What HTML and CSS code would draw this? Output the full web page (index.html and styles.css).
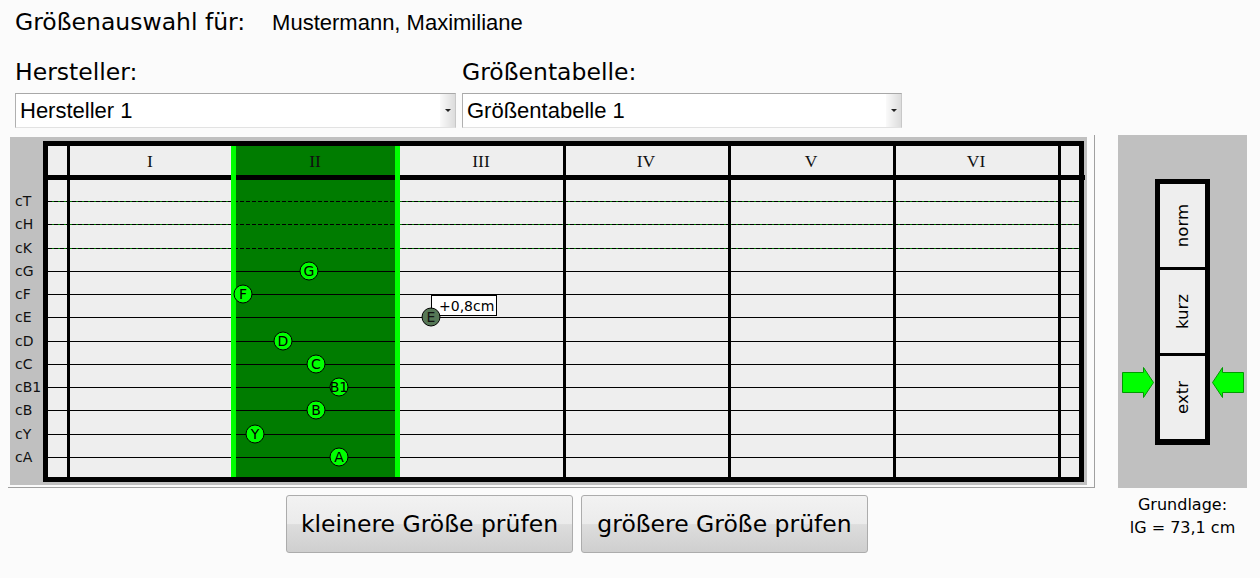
FILE: index.html
```html
<!DOCTYPE html>
<html>
<head>
    <title>Größenauswahl</title>
    <link rel="stylesheet" href="styles.css">
</head>
<body>
    <div class="title-row">
        <span class="title">Größenauswahl für:</span>
        <span class="person">Mustermann, Maximiliane</span>
    </div>

    <div class="fields">
        <div class="field field-maker">
            <label>Hersteller:</label>
            <div class="select">
                <span class="select-value">Hersteller 1</span>
                <span class="select-btn"><i class="caret"></i></span>
            </div>
        </div>
        <div class="field field-table">
            <label>Größentabelle:</label>
            <div class="select">
                <span class="select-value">Größentabelle 1</span>
                <span class="select-btn"><i class="caret"></i></span>
            </div>
        </div>
    </div>

    <div class="main">
        <div class="left">
            <div class="chart-frame">
                <svg class="chart" width="1077" height="348" viewBox="0 0 1077 348">
                    <rect class="plot" x="38" y="9" width="1031" height="331"/>
                    <rect class="col-active" x="221" y="9" width="169" height="331"/>

                    <!-- upper rows: dashed -->
                    <g class="row-dash-base">
                        <line x1="38" y1="64.5" x2="1069" y2="64.5"/>
                        <line x1="38" y1="87.5" x2="1069" y2="87.5"/>
                        <line x1="38" y1="111.5" x2="1069" y2="111.5"/>
                    </g>
                    <g class="row-dash">
                        <line x1="38" y1="64.5" x2="1069" y2="64.5"/>
                        <line x1="38" y1="87.5" x2="1069" y2="87.5"/>
                        <line x1="38" y1="111.5" x2="1069" y2="111.5"/>
                    </g>
                    <g class="row-line">
                        <line x1="38" y1="134.5" x2="1069" y2="134.5"/>
                        <line x1="38" y1="157.5" x2="1069" y2="157.5"/>
                        <line x1="38" y1="180.5" x2="1069" y2="180.5"/>
                        <line x1="38" y1="204.5" x2="1069" y2="204.5"/>
                        <line x1="38" y1="227.5" x2="1069" y2="227.5"/>
                        <line x1="38" y1="250.5" x2="1069" y2="250.5"/>
                        <line x1="38" y1="273.5" x2="1069" y2="273.5"/>
                        <line x1="38" y1="297.5" x2="1069" y2="297.5"/>
                        <line x1="38" y1="320.5" x2="1069" y2="320.5"/>
                    </g>

                    <g class="col-line">
                        <rect x="57" y="9" width="3" height="331"/>
                        <rect x="553" y="9" width="3" height="331"/>
                        <rect x="718" y="9" width="3" height="331"/>
                        <rect x="883" y="9" width="3" height="331"/>
                        <rect x="1048" y="9" width="3" height="331"/>
                        <rect x="38" y="38" width="1037" height="5"/>
                    </g>
                    <g class="col-edge">
                        <rect x="221" y="9" width="5" height="331"/>
                        <rect x="385" y="9" width="5" height="331"/>
                    </g>
                    <rect class="frame" x="35.5" y="6.5" width="1036" height="336"/>

                    <g class="col-head">
                        <text x="140" y="30">I</text>
                        <text x="305" y="30">II</text>
                        <text x="471" y="30">III</text>
                        <text x="636" y="30">IV</text>
                        <text x="801" y="30">V</text>
                        <text x="966" y="30">VI</text>
                    </g>

                    <g class="row-head">
                        <text x="5" y="69">cT</text>
                        <text x="5" y="92">cH</text>
                        <text x="5" y="116">cK</text>
                        <text x="5" y="139">cG</text>
                        <text x="5" y="162">cF</text>
                        <text x="5" y="185">cE</text>
                        <text x="5" y="209">cD</text>
                        <text x="5" y="232">cC</text>
                        <text x="5" y="255">cB1</text>
                        <text x="5" y="278">cB</text>
                        <text x="5" y="302">cY</text>
                        <text x="5" y="325">cA</text>
                    </g>

                    <g class="mark">
                        <circle cx="299" cy="134" r="9"/><text x="299" y="139">G</text>
                        <circle cx="233" cy="157" r="9"/><text x="233" y="162">F</text>
                        <circle cx="273" cy="204" r="9"/><text x="273" y="209">D</text>
                        <circle cx="306" cy="227" r="9"/><text x="306" y="232">C</text>
                        <circle cx="329" cy="250" r="9"/><text x="329" y="255">B1</text>
                        <circle cx="306" cy="273" r="9"/><text x="306" y="278">B</text>
                        <circle cx="245" cy="297" r="9"/><text x="245" y="302">Y</text>
                        <circle cx="329" cy="320" r="9"/><text x="329" y="325">A</text>
                    </g>

                    <rect class="tip" x="421.5" y="158.5" width="65" height="20"/>
                    <text class="tip-text" x="429" y="174">+0,8cm</text>
                    <g class="mark mark-off">
                        <circle cx="421" cy="180" r="9"/><text x="421" y="185">E</text>
                    </g>
                </svg>
            </div>

            <div class="actions">
                <button type="button" class="btn">kleinere Größe prüfen</button>
                <button type="button" class="btn">größere Größe prüfen</button>
            </div>
        </div>

        <div class="right">
            <div class="fit-panel">
                <div class="fit-box">
                    <div class="fit-cell"><span>norm</span></div>
                    <div class="fit-cell"><span>kurz</span></div>
                    <div class="fit-cell"><span>extr</span></div>
                </div>
                <svg class="arrow arrow-in-left" width="32" height="32" viewBox="0 0 32 32">
                    <polygon points="0.5,5.5 21.5,5.5 21.5,0.5 31.5,15.5 21.5,30.5 21.5,25.5 0.5,25.5"/>
                </svg>
                <svg class="arrow arrow-in-right" width="32" height="32" viewBox="0 0 32 32">
                    <polygon points="31.5,5.5 10.5,5.5 10.5,0.5 0.5,15.5 10.5,30.5 10.5,25.5 31.5,25.5"/>
                </svg>
            </div>
            <div class="basis">
                <div>Grundlage:</div>
                <div>lG = 73,1 cm</div>
            </div>
        </div>
    </div>
</body>
</html>
```

FILE: styles.css
```css
body {
    margin: 0;
    background-color: #fbfbfb;
    font-family: "DejaVu Sans", sans-serif;
    color: #000;
}

.title-row {
    padding: 9px 0 0 15px;
    height: 27px;
    line-height: 27px;
    white-space: nowrap;
}

.title {
    display: inline-block;
    width: 252px;
    font-size: 23.5px;
}

.person {
    font-family: "Liberation Sans", sans-serif;
    font-size: 22px;
}

.fields {
    display: flex;
    gap: 6px;
    margin-top: 23px;
    padding-left: 15px;
}

.field label {
    display: block;
    font-size: 23.5px;
    line-height: 27px;
    margin-bottom: 7px;
}

.field-maker {
    width: 441px;
}

.field-table {
    width: 440px;
}

.select {
    display: flex;
    height: 33px;
    background-color: #fff;
    border: 1px solid;
    border-color: #a8a8a8 #c8c8c8 #e2e2e2 #b0b0b0;
}

.select-value {
    flex: 1;
    padding-left: 4px;
    font-family: "Liberation Sans", sans-serif;
    font-size: 22px;
    line-height: 33px;
}

.select-btn {
    width: 15px;
    display: flex;
    align-items: center;
    justify-content: center;
    background: linear-gradient(to right, #fafafa, #dcdcdc);
}

.caret {
    width: 0;
    height: 0;
    border-left: 3px solid transparent;
    border-right: 3px solid transparent;
    border-top: 3px solid #222;
}

.main {
    display: flex;
    margin-top: 7px;
}

.left {
    width: 1095px;
}

.chart-frame {
    margin-left: 8px;
    padding: 2px 7px 2px 2px;
    border-right: 1px solid #a0a0a0;
    border-bottom: 1px solid #a0a0a0;
}

.chart {
    display: block;
    background-color: #c0c0c0;
}

.plot {
    fill: #eeeeee;
}

.col-active {
    fill: #007c00;
}

.row-dash-base line {
    stroke: #007c00;
    stroke-width: 1;
}

.row-dash line {
    stroke: #000;
    stroke-width: 1;
    stroke-dasharray: 4 2;
}

.row-line line {
    stroke: #000;
    stroke-width: 1;
}

.col-line rect {
    fill: #000;
}

.col-edge rect {
    fill: #00ff00;
}

.frame {
    fill: none;
    stroke: #000;
    stroke-width: 5;
}

.col-head text {
    font-family: "Liberation Serif", serif;
    font-size: 17.5px;
    fill: #111;
    text-anchor: middle;
}

.row-head text {
    font-family: "DejaVu Sans", sans-serif;
    font-size: 14px;
    fill: #111;
}

.mark circle {
    fill: #00ff00;
    stroke: #000;
    stroke-width: 1;
}

.mark text {
    font-family: "DejaVu Sans", sans-serif;
    font-size: 14px;
    fill: #000;
    text-anchor: middle;
}

.mark-off circle {
    fill: #567756;
}

.mark-off text {
    fill: #111;
}

.tip {
    fill: #fff;
    stroke: #000;
    stroke-width: 1;
}

.tip-text {
    font-family: "DejaVu Sans", sans-serif;
    font-size: 14px;
    fill: #000;
}

.actions {
    display: flex;
    gap: 8px;
    margin-top: 7px;
    padding-left: 286px;
}

.btn {
    width: 287px;
    height: 58px;
    padding: 0;
    font-family: "DejaVu Sans", sans-serif;
    font-size: 23.5px;
    color: #000;
    background: linear-gradient(to bottom, #f2f2f2 0%, #ebebeb 50%, #dddddd 51%, #cfcfcf 100%);
    border: 1px solid #acacac;
    border-radius: 3px;
    cursor: pointer;
}

.right {
    margin-left: 23px;
    width: 129px;
}

.fit-panel {
    position: relative;
    height: 353px;
    background-color: #c0c0c0;
    display: flex;
    align-items: center;
    justify-content: center;
}

.fit-box {
    width: 45px;
    height: 256px;
    border: 5px solid #000;
    background-color: #000;
    display: flex;
    flex-direction: column;
    gap: 3px;
}

.fit-cell {
    flex: 1;
    background-color: #eeeeee;
    display: flex;
    align-items: center;
    justify-content: center;
}

.fit-cell span {
    writing-mode: vertical-rl;
    transform: rotate(180deg);
    font-size: 16.5px;
    color: #000;
}

.arrow {
    position: absolute;
    top: 232px;
}

.arrow polygon {
    fill: #00ff00;
    stroke: #009a00;
    stroke-width: 1;
}

.arrow-in-left {
    left: 4px;
}

.arrow-in-right {
    left: 94px;
}

.basis {
    margin-top: 5px;
    text-align: center;
    font-size: 16px;
    line-height: 23px;
}
```
